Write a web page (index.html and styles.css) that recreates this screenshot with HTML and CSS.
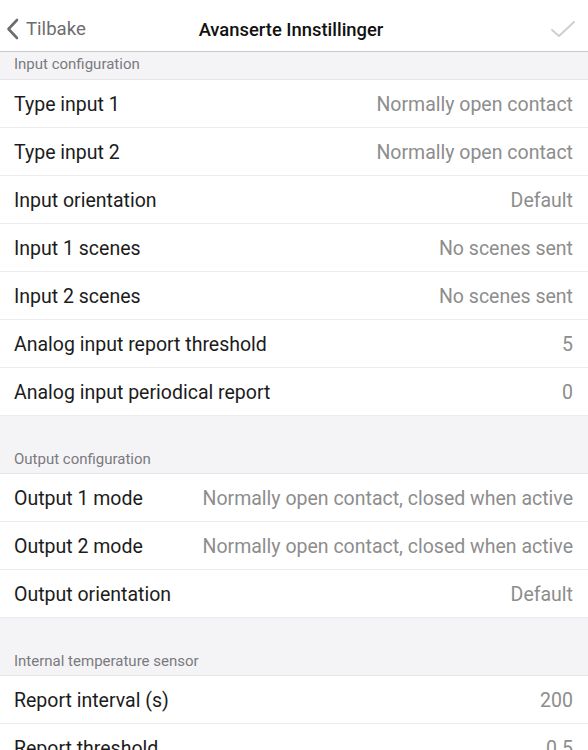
FILE: index.html
```html
<!DOCTYPE html>
<html>
<head>
<meta charset="utf-8">
<link rel="stylesheet" href="styles.css">
</head>
<body>
<header class="navbar">
  <div class="nav-back">
    <svg class="chev" width="13" height="22" viewBox="0 0 13 22"><path d="M11 2 L2.5 11 L11 20" fill="none" stroke="#6d6d6d" stroke-width="2.6" stroke-linecap="round" stroke-linejoin="round"/></svg>
    <span>Tilbake</span>
  </div>
  <div class="nav-title">Avanserte Innstillinger</div>
  <div class="nav-done">
    <svg width="26" height="20" viewBox="0 0 26 20"><path d="M2 11 L9 17 L24 3" fill="none" stroke="#cfcfcf" stroke-width="2" stroke-linecap="round" stroke-linejoin="round"/></svg>
  </div>
</header>
<main>
  <div class="section-head first">Input configuration</div>
  <div class="row"><span class="label">Type input 1</span><span class="value">Normally open contact</span></div>
  <div class="row"><span class="label">Type input 2</span><span class="value">Normally open contact</span></div>
  <div class="row"><span class="label">Input orientation</span><span class="value">Default</span></div>
  <div class="row"><span class="label">Input 1 scenes</span><span class="value">No scenes sent</span></div>
  <div class="row"><span class="label">Input 2 scenes</span><span class="value">No scenes sent</span></div>
  <div class="row"><span class="label">Analog input report threshold</span><span class="value">5</span></div>
  <div class="row"><span class="label">Analog input periodical report</span><span class="value">0</span></div>
  <div class="section-head">Output configuration</div>
  <div class="row"><span class="label">Output 1 mode</span><span class="value">Normally open contact, closed when active</span></div>
  <div class="row"><span class="label">Output 2 mode</span><span class="value">Normally open contact, closed when active</span></div>
  <div class="row"><span class="label">Output orientation</span><span class="value">Default</span></div>
  <div class="section-head">Internal temperature sensor</div>
  <div class="row"><span class="label">Report interval (s)</span><span class="value">200</span></div>
  <div class="row"><span class="label">Report threshold</span><span class="value">0.5</span></div>
</main>
</body>
</html>
```
FILE: styles.css
```css
* { box-sizing: border-box; }
html, body { margin: 0; padding: 0; }
body {
  background: #f4f4f6;
  font-family: Roboto, "Noto Sans", sans-serif;
  width: 588px;
  height: 750px;
  overflow: hidden;
}
.navbar {
  height: 52px;
  background: #ffffff;
  border-bottom: 1px solid #c9c9cc;
  display: grid;
  grid-template-columns: 1fr auto 1fr;
  align-items: center;
  padding: 7px 12px 0 6px;
}
.nav-back {
  display: flex;
  align-items: center;
  gap: 7px;
  color: #6d6d6d;
  font-size: 18.6px;
}
.chev { display: block; }
.nav-title {
  font-size: 18.4px;
  font-weight: 500;
  color: #111;
}
.nav-done {
  justify-self: end;
  display: flex;
  align-items: center;
}
.nav-done svg { display: block; }
.section-head {
  background: #f4f4f6;
  color: #7a7a7e;
  font-size: 15px;
  height: 58px;
  display: flex;
  align-items: flex-end;
  padding: 0 14px 5px;
  border-bottom: 1px solid #e6e6e8;
}
.section-head.first {
  height: 28px;
  padding-bottom: 6px;
}
.row {
  height: 48px;
  background: #ffffff;
  display: flex;
  align-items: center;
  justify-content: space-between;
  padding: 2px 15px 0 14px;
  border-bottom: 1px solid #ececee;
  font-size: 19.5px;
}
.label { color: #1c1c1c; }
.value { color: #8d8d8d; }
```
